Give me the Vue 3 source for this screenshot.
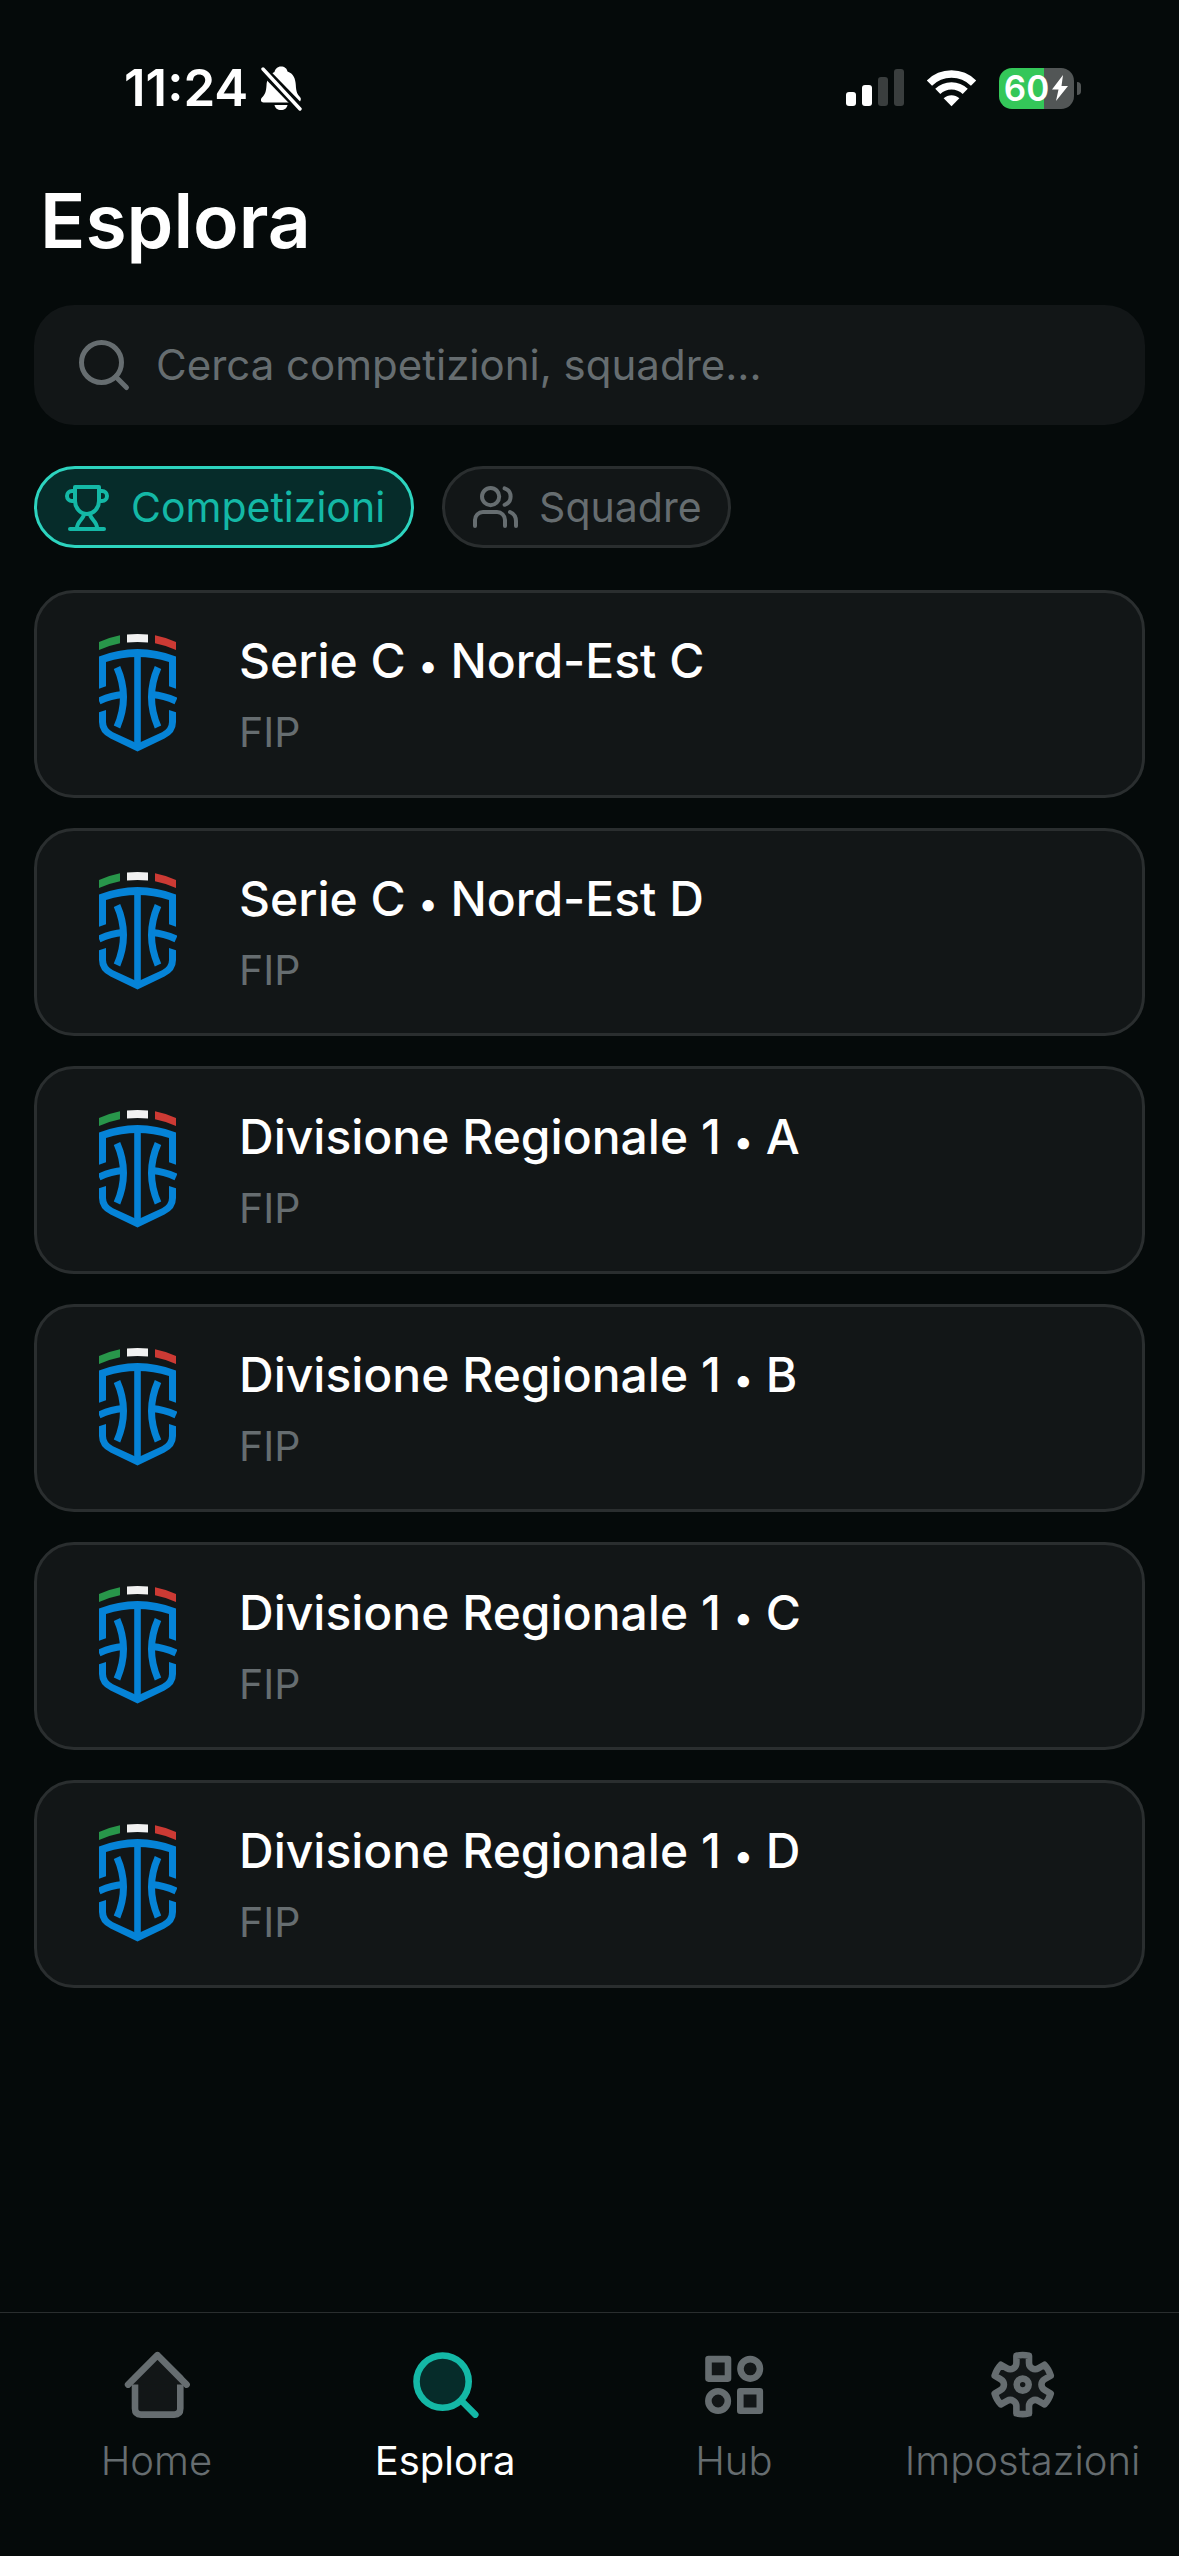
<template>
  <div class="screen">
    <header class="status-bar">
      <div class="status-bar__left">
        <span class="status-bar__time">11:24</span>
        <svg class="status-bar__bell" viewBox="0 0 42 46">
          <path
            d="M21 1.500c3.500 0 6 2 6.500 5 6 2 8 7.500 8.300 13.500.3 7 1.700 9.500 4.200 12 1.500 1.600 1 4-1 5.500H3.500c-2.500 0-3.500-3-1.500-5 3-2.800 4.200-6 4.500-12 .3-6 2.600-11.500 8-13.500.5-3 3-5.500 6.500-5.500z"
            fill="#fff"
          />
          <path d="M14.500 40h13c-.5 3-3 5-6.500 5s-6-2-6.500-5z" fill="#fff" />
          <path d="M3 5l37 38" stroke="#050a0a" stroke-width="9" />
          <path d="M3 4l37 40" stroke="#fff" stroke-width="3.400" stroke-linecap="round" />
        </svg>
      </div>
      <div class="status-bar__right">
        <svg class="status-bar__signal" viewBox="0 0 58 38">
          <rect x="0" y="23" width="10" height="14" rx="3" fill="#fff" />
          <rect x="16" y="16" width="10" height="21" rx="3" fill="#fff" />
          <rect x="32" y="8" width="10" height="29" rx="3" fill="#3a3e3e" />
          <rect x="48" y="0" width="10" height="37" rx="3" fill="#3a3e3e" />
        </svg>
        <svg class="status-bar__wifi" viewBox="0 0 52 38">
          <g fill="none" stroke="#fff">
            <path d="M3.500 14a32 32 0 0 1 45 0" stroke-width="7.600" />
            <path d="M12 22.500a20 20 0 0 1 28 0" stroke-width="7.400" />
          </g>
          <path d="M18 29.500c4.500-4 11.500-4 16 0l-8 8z" fill="#fff" />
        </svg>
        <div class="battery">
          <div class="battery__body">
            <span>60</span>
            <svg class="battery__bolt" viewBox="0 0 18 26">
              <path d="M12 0L1 14.500h6.500L5 26 17 11h-6.500z" fill="#fff" />
            </svg>
          </div>
          <i class="battery__tip"></i>
        </div>
      </div>
    </header>

    <main class="content">
      <h1 class="title">Esplora</h1>

      <label class="search">
        <svg class="search__icon" viewBox="0 0 24 24">
          <circle cx="11" cy="11" r="8" />
          <path d="M21 21l-4.300-4.300" />
        </svg>
        <input v-model="search" type="text" aria-label="Cerca" placeholder="Cerca competizioni, squadre..." />
      </label>

      <div class="chips">
        <button
          v-for="f in filters"
          :key="f.label"
          type="button"
          class="chip"
          :class="{ active: filter === f.label }"
          @click="filter = f.label"
        >
          <svg class="chip__icon" viewBox="0 0 24 24">
            <path v-for="d in f.paths" :key="d" :d="d" />
          </svg>
          {{ f.label }}
        </button>
      </div>

      <ul class="list">
        <li v-for="c in competitions" :key="c.name + c.group" class="card">
          <svg class="card__logo" viewBox="0 0 78 122">
            <path d="M0 9Q10 4.500 21 2.300v8Q10 12.500 0 17z" fill="#28964a" />
            <path d="M28 1.500q10.500-1 21 0v8q-10.500-1-21 0z" fill="#f1f1f1" />
            <path d="M56 2.300Q67 4.500 77 9v8Q67 12.500 56 10.300z" fill="#cc3a34" />
            <g fill="#0583d7">
              <path d="M0 23.500Q38.500 8.500 77 23.500V55.700L70 53.300V29Q38.500 19 7 29V53.300L0 55.700z" />
              <path d="M35.200 20h6.600v93h-6.600z" />
              <path
                d="M0 79.300L7 77V89Q7 95.500 14 99.300L38.500 110.500 63 99.300Q70 95.500 70 89V77L77 79.300V89Q77 100 65.500 105.500L38.500 118.500 11.500 105.500Q0 100 0 89z"
              />
            </g>
            <g fill="none" stroke="#0583d7" stroke-width="7">
              <path d="M18 34.500Q31 64 18 94" />
              <path d="M59 34.500Q46 64 59 94" />
              <path d="M0 68Q12 62.500 24 61.500" />
              <path d="M77 68Q65 62.500 53 61.500" />
            </g>
          </svg>
          <div class="card__text">
            <div class="card__name">{{ c.name }} <span class="card__dot">•</span> {{ c.group }}</div>
            <div class="card__org">FIP</div>
          </div>
        </li>
      </ul>
    </main>

    <nav class="tabs">
      <a v-for="t in tabs" :key="t.label" href="#" class="tab" :class="{ active: t.label === 'Esplora' }">
        <svg class="tab__icon" viewBox="0 0 24 24">
          <path v-for="d in t.paths" :key="d" :d="d" />
        </svg>
        <span>{{ t.label }}</span>
      </a>
    </nav>
  </div>
</template>

<script setup>
import { ref } from "vue";

const search = ref("");
const filter = ref("Competizioni");

const filters = [
  {
    label: "Competizioni",
    paths: [
      "M6 9H4.500a2.500 2.500 0 0 1 0-5H6",
      "M18 9h1.500a2.500 2.500 0 0 0 0-5H18",
      "M3.500 23h17",
      "M10.500 15.500C10.500 18 7 19 7 22.500",
      "M13.500 15.500C13.500 18 17 19 17 22.500",
      "M18 2H6v7a6 6.500 0 0 0 12 0V2Z",
    ],
  },
  {
    label: "Squadre",
    paths: [
      "M17 21.500v-3a4 4 0 0 0-4-4H6a4 4 0 0 0-4 4v3",
      "M9.800 2.500a4.300 4.300 0 1 0 0 8.600a4.300 4.300 0 1 0 0-8.600",
      "M22.500 21.500v-2.500a5 5 0 0 0-3-4.500",
      "M16.800 2.700a4.300 4.300 0 0 1 0 8.200",
    ],
  },
];

const competitions = [
  { name: "Serie C", group: "Nord-Est C" },
  { name: "Serie C", group: "Nord-Est D" },
  { name: "Divisione Regionale 1", group: "A" },
  { name: "Divisione Regionale 1", group: "B" },
  { name: "Divisione Regionale 1", group: "C" },
  { name: "Divisione Regionale 1", group: "D" },
];

// six teeth, the same outline turned by 60 degrees each time
const gear = (cx, cy) => {
  const point = (x, y, i) => {
    const a = (i * Math.PI) / 3;
    const px = cx + x * Math.cos(a) - y * Math.sin(a);
    const py = cy + x * Math.sin(a) + y * Math.cos(a);
    return `${px.toFixed(2)} ${py.toFixed(2)}`;
  };
  let d = "";
  for (let i = 0; i < 6; i++) {
    d += `${i ? "L" : "M"}${point(-2.1, -9.6, i)}Q${point(0, -10.1, i)} ${point(2.1, -9.6, i)}`;
    d += `L${point(2.1, -7.2, i)}A2.05 2.05 0 0 0 ${point(-2.1, -7.2, i + 1)}`;
  }
  return d + "z";
};

const tabs = [
  {
    label: "Home",
    paths: ["M5 10V20.200q0 2 2 2h11.100q2 0 2-2V10L12.500 2.500z", "M2.700 12.200l9.800-9.800 9.700 9.800"],
  },
  {
    label: "Esplora",
    paths: ["M11.200 2.500a8.700 8.700 0 1 0 0 17.400a8.700 8.700 0 1 0 0-17.400z", "M17.400 17.500l4.700 4.700"],
  },
  {
    label: "Hub",
    paths: [
      "M3.500 3.700h6.500v6.500h-6.500z",
      "M17.400 3.700a3.250 3.250 0 1 0 0 6.500a3.250 3.250 0 1 0 0-6.500z",
      "M6.700 14.400a3.250 3.250 0 1 0 0 6.500a3.250 3.250 0 1 0 0-6.500z",
      "M14.100 14.400h6.500v6.500h-6.500z",
    ],
  },
  {
    label: "Impostazioni",
    paths: [gear(11.9, 12.2), "M11.900 10.200a2 2 0 1 0 0 4a2 2 0 1 0 0-4z"],
  },
];
</script>

<style>
body {
  background: #050a0a;
}
</style>

<style scoped>
* {
  box-sizing: border-box;
}
.screen {
  display: flex;
  flex-direction: column;
  min-height: 100vh;
  background: #050a0a;
  color: #fff;
  font-family: Inter, "Liberation Sans", sans-serif;
}
.status-bar {
  display: flex;
  justify-content: space-between;
  align-items: center;
  height: 176px;
  padding: 0 98px 0 124px;
}
.status-bar__left,
.status-bar__right {
  display: flex;
  align-items: center;
}
.status-bar__left {
  gap: 12px;
}
.status-bar__right {
  gap: 22px;
}
.status-bar__time {
  font-size: 51px;
  line-height: 60px;
  font-weight: 600;
}
.status-bar__bell {
  width: 42px;
  height: 46px;
}
.status-bar__signal {
  width: 58px;
  height: 38px;
}
.status-bar__wifi {
  width: 51px;
  height: 38px;
}
.battery {
  display: flex;
  align-items: center;
  gap: 3px;
}
.battery__body {
  display: flex;
  align-items: center;
  justify-content: center;
  gap: 2px;
  width: 75px;
  height: 41px;
  border-radius: 13px;
  background: linear-gradient(to right, #34c759 60%, #525656 60%);
  font-size: 35px;
  line-height: 41px;
  font-weight: 600;
}
.battery__bolt {
  width: 18px;
  height: 26px;
}
.battery__tip {
  width: 4px;
  height: 13px;
  border-radius: 0 6px 6px 0;
  background: #525656;
}
.content {
  flex: 1;
  padding: 0 34px;
}
.title {
  margin: 0 0 39px;
  padding: 0 6px;
  font-size: 75px;
  line-height: 90px;
  font-weight: 600;
}
.search {
  display: flex;
  align-items: center;
  gap: 22px;
  height: 120px;
  padding: 0 40px;
  border-radius: 40px;
  background: #121617;
}
.search__icon,
.chip__icon,
.tab__icon {
  flex: none;
  fill: none;
  stroke: currentColor;
  stroke-width: 2;
  stroke-linecap: round;
  stroke-linejoin: round;
}
.search__icon {
  width: 60px;
  height: 60px;
  color: #666d70;
}
.search input {
  flex: 1;
  min-width: 0;
  padding: 0;
  border: 0;
  outline: 0;
  background: none;
  color: #fff;
  font-family: inherit;
  font-size: 42px;
  line-height: 52px;
}
.search input::placeholder {
  color: #666d70;
  opacity: 1;
}
.chips {
  display: flex;
  gap: 28px;
  margin: 41px 0 42px;
}
.chip {
  display: flex;
  align-items: center;
  gap: 20px;
  height: 82px;
  padding: 0 26px;
  border: 3px solid #2a2e2f;
  border-radius: 41px;
  background: #121617;
  color: #666d70;
  font-family: inherit;
  font-size: 41px;
  line-height: 52px;
}
.chip.active {
  border-color: #2dd4bf;
  background: #062c2a;
  color: #14b8a6;
}
.chip__icon {
  width: 48px;
  height: 48px;
}
.list {
  display: grid;
  gap: 30px;
  margin: 0;
  padding: 0;
  list-style: none;
}
.card {
  display: flex;
  align-items: center;
  gap: 62px;
  height: 208px;
  padding: 0 62px;
  border: 3px solid #2a2e2f;
  border-radius: 40px;
  background: #121617;
}
.card__logo {
  width: 78px;
  height: 122px;
}
.card__name {
  font-size: 48px;
  line-height: 76px;
  font-weight: 500;
}
.card__dot {
  font-size: 36px;
  line-height: 1;
}
.card__org {
  color: #666d70;
  font-size: 41px;
  line-height: 66px;
}
.tabs {
  display: grid;
  grid-template-columns: repeat(4, 1fr);
  height: 244px;
  padding: 35px 12px 0;
  border-top: 1px solid #2a2e2f;
}
.tab {
  display: flex;
  flex-direction: column;
  align-items: center;
  gap: 16px;
  color: #666d70;
  font-size: 40px;
  line-height: 50px;
  font-weight: 300;
  text-decoration: none;
}
.tab__icon {
  width: 72px;
  height: 72px;
  fill: #121617;
  stroke-width: 2.2;
}
.tab.active {
  color: #fff;
  font-weight: 400;
}
.tab.active .tab__icon {
  color: #14b8a6;
  fill: #062c2a;
}
</style>
